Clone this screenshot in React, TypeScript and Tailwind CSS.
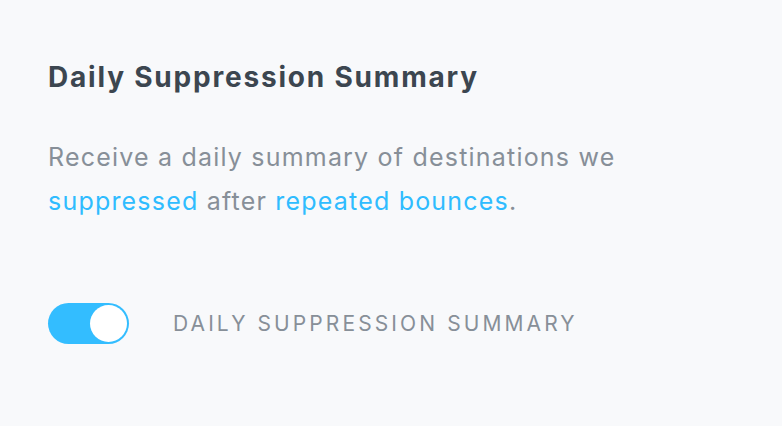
import { useState } from "react";

function Toggle({ on, onChange }: { on: boolean; onChange: (v: boolean) => void }) {
	return (
		<button
			type="button"
			role="switch"
			aria-checked={on}
			onClick={() => onChange(!on)}
			className={`relative flex h-[41px] w-[81px] shrink-0 items-center rounded-full p-[2px] transition-colors ${
				on ? "justify-end bg-[#33bdff]" : "justify-start bg-[#d5dbe1]"
			}`}
		>
			<span className="block h-[37px] w-[37px] rounded-full bg-white" />
		</button>
	);
}

export default function App() {
	const [enabled, setEnabled] = useState(true);

	return (
		<div className="min-h-[426px] bg-[#f8f9fb] px-[48px] pt-[57px] font-['Inter',sans-serif]">
			<h2 className="text-[28px] font-bold leading-[40px] tracking-[1.8px] text-[#3c4650]">
				Daily Suppression Summary
			</h2>

			<p className="mt-[38px] max-w-[640px] text-[25px] leading-[44px] tracking-[1.2px] text-[#878f98]">
				Receive a daily summary of destinations we{" "}
				<a href="#" className="text-[#2fbcff]">
					suppressed
				</a>{" "}
				after{" "}
				<a href="#" className="text-[#2fbcff]">
					repeated bounces
				</a>
				.
			</p>

			<div className="mt-[80px] flex items-center gap-[44px]">
				<Toggle on={enabled} onChange={setEnabled} />
				<span className="text-[21px] tracking-[3.1px] text-[#878f98]">DAILY SUPPRESSION SUMMARY</span>
			</div>
		</div>
	);
}
